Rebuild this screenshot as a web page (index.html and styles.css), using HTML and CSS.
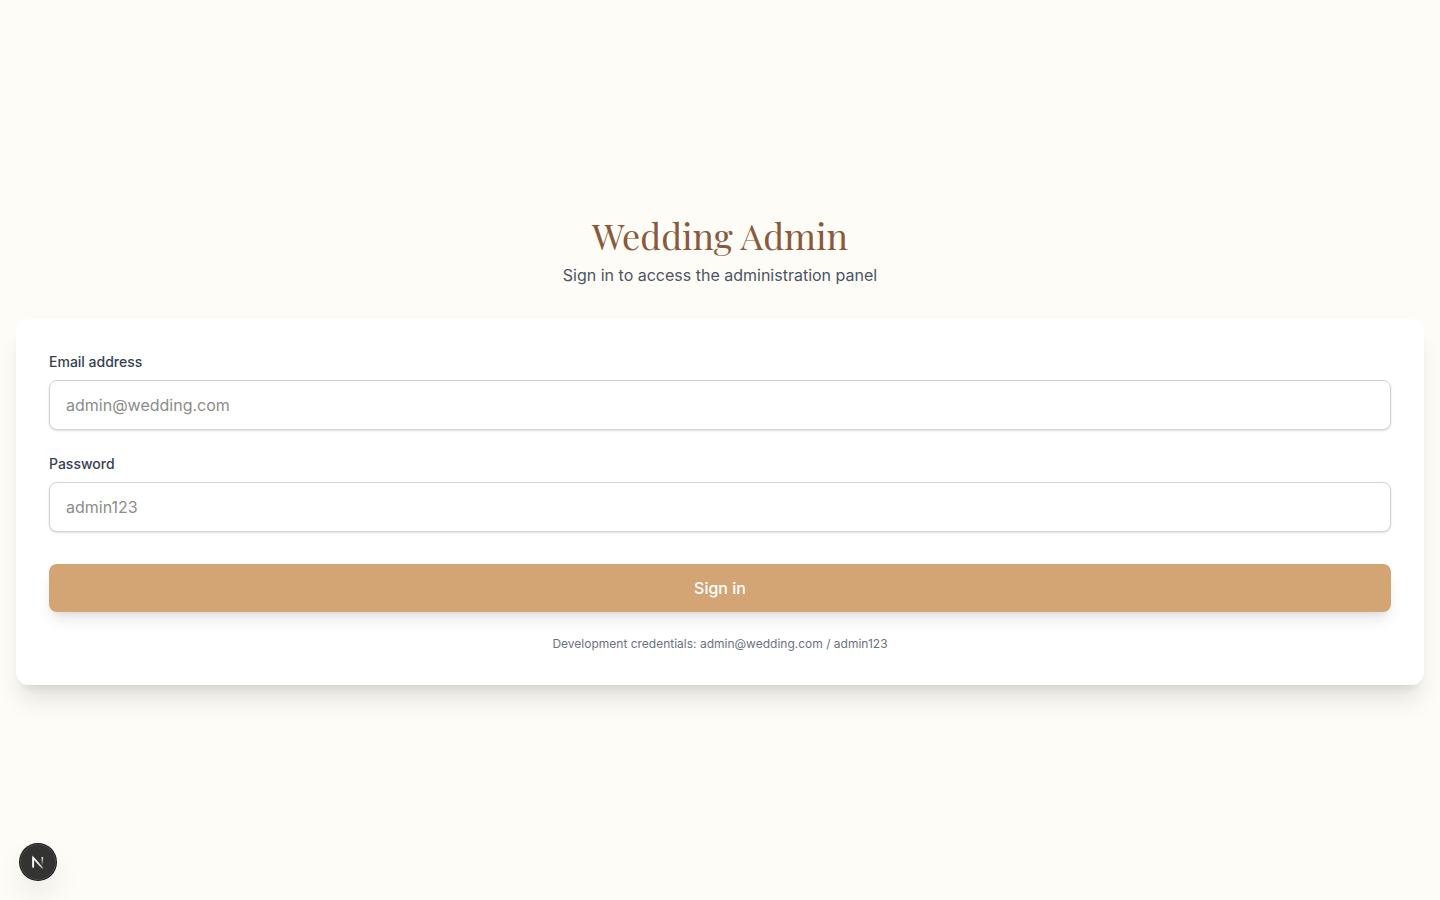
FILE: index.html
```html
<!DOCTYPE html>
<html lang="en">
<head>
<meta charset="utf-8">
<meta name="viewport" content="width=device-width, initial-scale=1">
<title>Wedding Admin</title>
<link rel="stylesheet" href="styles.css">
</head>
<body>
<main class="page">
  <header class="intro">
    <h1 class="title">Wedding Admin</h1>
    <p class="subtitle">Sign in to access the administration panel</p>
  </header>
  <section class="card">
    <form class="form">
      <div class="field">
        <label class="label" for="email">Email address</label>
        <input class="input" id="email" type="email" placeholder="admin@wedding.com">
      </div>
      <div class="field">
        <label class="label" for="password">Password</label>
        <input class="input" id="password" type="password" placeholder="admin123">
      </div>
      <button class="submit" type="submit">Sign in</button>
    </form>
    <p class="hint">Development credentials: admin@wedding.com / admin123</p>
  </section>
</main>
<button class="devtools" type="button" aria-label="Open dev tools">
  <svg class="devtools-logo" viewBox="0 0 40 40" fill="none" aria-hidden="true">
    <defs>
      <linearGradient id="diagonal" gradientUnits="userSpaceOnUse" x1="20" y1="20" x2="26" y2="28">
        <stop offset="0" stop-color="#fff"/>
        <stop offset="0.6" stop-color="#fff" stop-opacity="0.75"/>
        <stop offset="1" stop-color="#fff" stop-opacity="0.1"/>
      </linearGradient>
      <linearGradient id="stem" gradientUnits="userSpaceOnUse" x1="25" y1="14" x2="25" y2="24">
        <stop offset="0" stop-color="#fff"/>
        <stop offset="1" stop-color="#fff" stop-opacity="0"/>
      </linearGradient>
    </defs>
    <path d="M14.7 26V15.2L25.6 27.6" stroke="url(#diagonal)" stroke-width="1.8"/>
    <path d="M14.7 26V14.5" stroke="#fff" stroke-width="1.8"/>
    <path d="M24.8 14.5V24" stroke="url(#stem)" stroke-width="1.7"/>
  </svg>
</button>
</body>
</html>
```
FILE: styles.css
```css
*, *::before, *::after {
  box-sizing: border-box;
}

body {
  margin: 0;
  background: #fefcf7;
  color: #374151;
  font-family: Inter, "Liberation Sans", sans-serif;
  font-size: 16px;
  line-height: 24px;
}

.page {
  display: flex;
  flex-direction: column;
  justify-content: center;
  gap: 32px;
  min-height: 100vh;
  padding: 16px;
}

.intro {
  display: flex;
  flex-direction: column;
  gap: 8px;
  text-align: center;
}

.title {
  margin: 0;
  color: #8b5a3c;
  font-family: "Playfair Display", "Liberation Serif", serif;
  font-size: 36px;
  font-weight: 400;
  line-height: 40px;
}

.subtitle {
  margin: 0;
  color: #4b5563;
}

.card {
  display: flex;
  flex-direction: column;
  gap: 24px;
  padding: 32px;
  border: 1px solid #fff;
  border-radius: 12px;
  background: #fff;
  box-shadow: 0 20px 25px -5px rgba(0, 0, 0, 0.1), 0 8px 10px -6px rgba(0, 0, 0, 0.1);
}

.form {
  display: flex;
  flex-direction: column;
  gap: 24px;
}

.field {
  display: flex;
  flex-direction: column;
  gap: 8px;
}

.label {
  color: #374151;
  font-size: 14px;
  font-weight: 500;
  line-height: 20px;
}

.input {
  width: 100%;
  padding: 12px 16px;
  border: 1px solid #d1d5db;
  border-radius: 8px;
  background: #fff;
  box-shadow: 0 1px 3px rgba(0, 0, 0, 0.1), 0 1px 2px -1px rgba(0, 0, 0, 0.1);
  color: #374151;
  font: inherit;
}

.input::placeholder {
  color: #8c8c8c;
}

.submit {
  width: 100%;
  margin-top: 8px;
  padding: 12px 16px;
  border: 0;
  border-radius: 8px;
  background: #d4a574;
  box-shadow: 0 10px 15px -3px rgba(0, 0, 0, 0.1), 0 4px 6px -4px rgba(0, 0, 0, 0.1);
  color: #fff;
  font: inherit;
  font-weight: 500;
}

.hint {
  margin: 0;
  color: #6b7280;
  font-size: 12px;
  line-height: 16px;
  text-align: center;
}

.devtools {
  position: fixed;
  bottom: 20px;
  left: 20px;
  width: 36px;
  height: 36px;
  padding: 0;
  border: 0;
  border-radius: 50%;
  background: #333331;
  box-shadow: 0 0 0 1px #171717, inset 0 0 0 1px #474745, 0 16px 32px -8px rgba(0, 0, 0, 0.24);
}

.devtools-logo {
  display: block;
  width: 100%;
  height: 100%;
}
```
